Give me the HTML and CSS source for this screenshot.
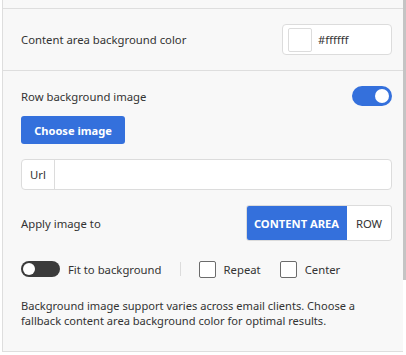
FILE: index.html
```html
<!DOCTYPE html>
<html>
<head>
<meta charset="utf-8">
<link rel="stylesheet" href="styles.css">
</head>
<body>
<div class="panel">
  <div class="section section-top"></div>
  <div class="section section-color">
    <div class="row">
      <span class="label">Content area background color</span>
      <div class="color-input">
        <span class="swatch"></span>
        <span class="hex">#ffffff</span>
      </div>
    </div>
  </div>
  <div class="section section-image">
    <div class="row">
      <span class="label">Row background image</span>
      <span class="toggle on"><span class="knob"></span></span>
    </div>
    <button class="btn-primary">Choose image</button>
    <div class="url-input">
      <span class="addon">Url</span>
      <span class="field"></span>
    </div>
    <div class="row row-apply">
      <span class="label">Apply image to</span>
      <div class="segmented">
        <span class="seg active">CONTENT AREA</span>
        <span class="seg">ROW</span>
      </div>
    </div>
    <div class="options">
      <span class="toggle small off"><span class="knob"></span></span>
      <span class="opt-label">Fit to background</span>
      <span class="divider"></span>
      <span class="checkbox"></span>
      <span class="opt-label">Repeat</span>
      <span class="checkbox cb2"></span>
      <span class="opt-label">Center</span>
    </div>
    <p class="note">Background image support varies across email clients. Choose a fallback content area background color for optimal results.</p>
  </div>
</div>
<div class="scrollbar"></div>
</body>
</html>
```
FILE: styles.css
```css
html, body {
  margin: 0;
  padding: 0;
  background: #ffffff;
}
body {
  font-family: "Noto Sans", "Open Sans", sans-serif;
  font-size: 11.3px;
  color: #333333;
  width: 406px;
  height: 355px;
  overflow: hidden;
}
.panel {
  margin-left: 2px;
  width: 401px;
  border-left: 1px solid #dedede;
  background: #f8f8f8;
  box-sizing: border-box;
}
.section {
  border-bottom: 1px solid #dedede;
  padding: 0 11px 0 18px;
}
.section-top {
  height: 8px;
}
.section-color {
  height: 62px;
  padding-top: 15px;
  box-sizing: border-box;
}
.row {
  display: flex;
  align-items: center;
  justify-content: space-between;
}
.label {
  font-size: 11.3px;
  color: #333;
}
.color-input {
  width: 110px;
  height: 31px;
  box-sizing: border-box;
  border: 1px solid #dcdcdc;
  border-radius: 4px;
  background: #fff;
  display: flex;
  align-items: center;
  padding-left: 5px;
}
.swatch {
  width: 24px;
  height: 24px;
  box-sizing: border-box;
  border: 1px solid #dcdcdc;
  border-radius: 2px;
  background: #fff;
}
.hex {
  margin-left: 6px;
  font-size: 11.3px;
  color: #333;
}
.section-image {
  height: 281px;
  box-sizing: border-box;
  padding-top: 15px;
}
.toggle {
  position: relative;
  display: inline-block;
  width: 40px;
  height: 20px;
  border-radius: 10px;
  background: #3470dc;
  flex: none;
}
.toggle .knob {
  position: absolute;
  top: 3px;
  right: 3px;
  width: 14px;
  height: 14px;
  border-radius: 50%;
  background: #fff;
}
.toggle.small {
  width: 39px;
  height: 16px;
  border-radius: 8px;
  background: #3b3b3b;
}
.toggle.small .knob {
  top: 2px;
  left: 2px;
  right: auto;
  width: 12px;
  height: 12px;
}
.btn-primary {
  display: block;
  margin-top: 10px;
  width: 104px;
  height: 28px;
  border: none;
  border-radius: 3px;
  background: #3470dc;
  color: #fff;
  font-family: inherit;
  font-size: 11.1px;
  font-weight: 700;
  padding: 0;
}
.url-input {
  margin-top: 15px;
  height: 31px;
  box-sizing: border-box;
  border: 1px solid #dcdcdc;
  border-radius: 4px;
  background: #fff;
  display: flex;
}
.addon {
  width: 32px;
  border-right: 1px solid #dcdcdc;
  display: flex;
  align-items: center;
  justify-content: center;
  font-size: 11.3px;
}
.field {
  flex: 1;
}
.row-apply {
  margin-top: 15px;
}
.segmented {
  display: flex;
  height: 36px;
  box-sizing: border-box;
  border: 1px solid #dcdcdc;
  border-radius: 3px;
  background: #fff;
  overflow: hidden;
}
.seg {
  display: flex;
  align-items: center;
  justify-content: center;
  width: 44px;
  font-size: 11.3px;
  color: #333;
}
.seg.active {
  background: #3470dc;
  color: #fff;
  font-weight: 700;
  font-size: 11.2px;
  width: 101px;
  box-sizing: border-box;
  padding: 0;
  margin: -1px 0 -1px -1px;
}
.options {
  margin-top: 19px;
  display: flex;
  align-items: center;
  height: 18px;
}
.opt-label {
  font-size: 11.3px;
  color: #333;
}
.toggle.small + .opt-label {
  margin-left: 8px;
}
.divider {
  width: 1px;
  height: 14px;
  background: #dcdcdc;
  margin: 0 18px 0 18px;
}
.checkbox {
  width: 17px;
  height: 17px;
  box-sizing: border-box;
  border: 1px solid #6b6b6b;
  border-radius: 2px;
  background: #fff;
  margin-right: 8px;
}
.cb2 {
  margin-left: 19px;
}
.note {
  margin: 20px 0 0 0;
  font-size: 11.1px;
  line-height: 15px;
  color: #333;
}
.scrollbar {
  position: absolute;
  top: 0;
  left: 403px;
  width: 3px;
  height: 280px;
  background: #c4c4c4;
}
```
